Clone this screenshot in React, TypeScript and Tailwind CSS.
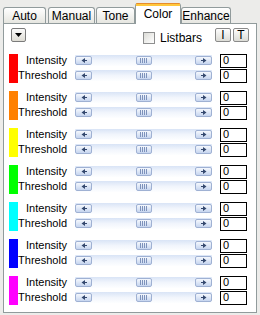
import React from "react";

const swatches = ["#ff0000", "#ff8000", "#ffff00", "#00ff00", "#00ffff", "#0000ff", "#ff00ff"];

const tabs = [
  { label: "Auto", w: "w-[43px]", ml: "ml-[3px]" },
  { label: "Manual", w: "w-[47px]", ml: "ml-[2px]" },
  { label: "Tone", w: "w-[39px]", ml: "ml-[1px]" },
  { label: "Color", w: "w-[46px]", ml: "ml-0", active: true },
  { label: "Enhance", w: "w-[50px]", ml: "ml-0" },
];

const ArrowButton = ({ dir }: { dir: "left" | "right" }) => (
  <div className="flex h-[9px] w-[17px] items-center justify-center rounded-[2px] border border-[#9fb1d3] bg-gradient-to-b from-[#f5f8fd] to-[#c6d5ef]">
    <svg width="6" height="5" viewBox="0 0 6 5">
      {dir === "left" ? (
        <path d="M0.5 2.5 L4 0 L4 5 Z M4 2 H6 V3 H4 Z" fill="#34486e" />
      ) : (
        <path d="M5.5 2.5 L2 0 L2 5 Z M0 2 H2 V3 H0 Z" fill="#34486e" />
      )}
    </svg>
  </div>
);

const Thumb = () => (
  <div className="flex h-[9px] w-[16px] items-center justify-center gap-[1px] rounded-[2px] border border-[#9fb1d3] bg-gradient-to-b from-[#f5f8fd] to-[#c6d5ef]">
    <span className="h-[5px] w-[1px] bg-[#7d92bb]" />
    <span className="h-[5px] w-[1px] bg-[#7d92bb]" />
    <span className="h-[5px] w-[1px] bg-[#7d92bb]" />
    <span className="h-[5px] w-[1px] bg-[#7d92bb]" />
  </div>
);

const Slider = () => (
  <div className="flex h-[11px] w-[137px] items-center justify-between rounded-[1px] bg-gradient-to-b from-[#d9e4f6] via-[#f1f5fc] to-[#fdfeff]">
    <ArrowButton dir="left" />
    <Thumb />
    <ArrowButton dir="right" />
  </div>
);

const Row = ({ label }: { label: string }) => (
  <div className="flex h-[15px] items-center">
    <div className="w-[49px] text-right leading-none">{label}</div>
    <div className="ml-[8px]">
      <Slider />
    </div>
    <div className="ml-[8px] flex h-[14px] w-[27px] items-center border border-black bg-white pl-[2px] leading-none">
      0
    </div>
  </div>
);

const Group = ({ color }: { color: string }) => (
  <div className="flex items-start">
    <div className="mt-[1px] h-[29px] w-[9px]" style={{ backgroundColor: color }} />
    <div className="flex flex-col">
      <Row label="Intensity" />
      <Row label="Threshold" />
    </div>
  </div>
);

const SmallButton = ({ children }: { children: React.ReactNode }) => (
  <div className="flex h-[14px] w-[16px] items-center justify-center rounded-[2px] border border-[#8a8a8a] bg-gradient-to-b from-[#fdfdfd] to-[#dcdcd6] text-[12px] leading-none">
    {children}
  </div>
);

export default function App() {
  return (
    <div
      className="h-[315px] w-[260px] bg-[#ececea] pt-[3px] text-[11px] text-black"
      style={{ fontFamily: '"Liberation Sans", Arial, sans-serif' }}
    >
      <div className="flex h-[20px] items-end">
        {tabs.map((t) =>
          t.active ? (
            <div
              key={t.label}
              className={`relative z-10 -mb-[1px] flex h-[21px] ${t.w} ${t.ml} flex-col rounded-t-[3px] border-x border-[#919b9c] bg-white`}
            >
              <div className="h-[1px] rounded-t-[3px] bg-[#e68b2c]" />
              <div className="h-[2px] bg-[#ffc73c]" />
              <div className="flex flex-1 items-start justify-center pt-[2px] text-[12px] leading-none">{t.label}</div>
            </div>
          ) : (
            <div
              key={t.label}
              className={`flex h-[16px] ${t.w} ${t.ml} items-center justify-center rounded-t-[3px] border-x border-t border-[#919b9c] bg-gradient-to-b from-white to-[#e6e6e0] text-[12px] leading-none`}
            >
              {t.label}
            </div>
          )
        )}
      </div>
      <div className="mx-[3px] h-[290px] border border-[#919b9c] bg-white">
        <div className="flex items-start pl-[7px] pt-[4px]">
          <div className="flex h-[14px] w-[15px] items-center justify-center rounded-[2px] border border-[#7b7b7b] bg-gradient-to-b from-[#fbfbfb] to-[#dedcd4]">
            <svg width="7" height="4" viewBox="0 0 7 4">
              <path d="M0 0 H7 L3.5 4 Z" fill="#000" />
            </svg>
          </div>
          <div className="ml-[117px] mt-[4px] flex items-center">
            <div className="h-[12px] w-[12px] border border-[#8e8f8f] bg-gradient-to-br from-[#dcdcd7] to-white" />
            <span className="ml-[5px] text-[12px] leading-none">Listbars</span>
          </div>
          <div className="ml-[13px] flex gap-[2px]">
            <SmallButton>I</SmallButton>
            <SmallButton>T</SmallButton>
          </div>
        </div>
        <div className="mt-[9px] flex flex-col gap-[7px] pl-[5px]">
          {swatches.map((c) => (
            <Group key={c} color={c} />
          ))}
        </div>
      </div>
    </div>
  );
}
